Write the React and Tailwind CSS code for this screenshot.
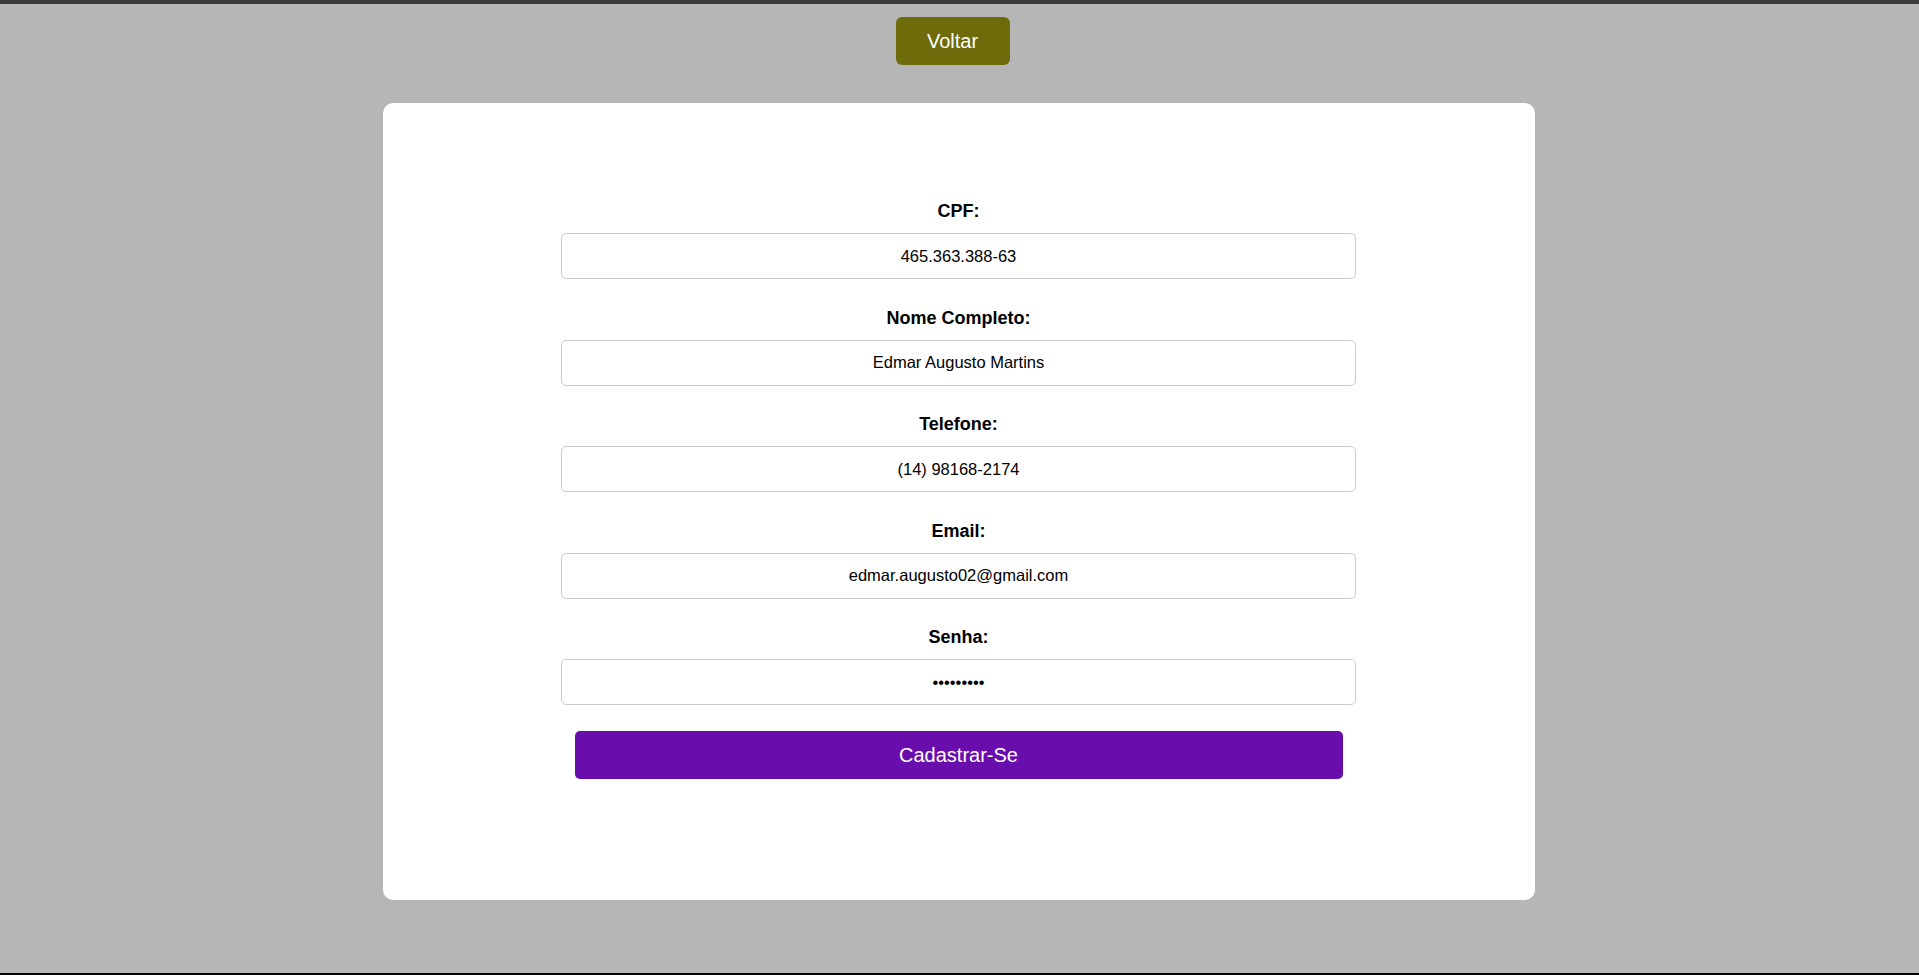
const fields = [
  { label: 'CPF:', value: '465.363.388-63', type: 'text' },
  { label: 'Nome Completo:', value: 'Edmar Augusto Martins', type: 'text' },
  { label: 'Telefone:', value: '(14) 98168-2174', type: 'text' },
  { label: 'Email:', value: 'edmar.augusto02@gmail.com', type: 'email' },
  { label: 'Senha:', value: '123456789', type: 'password' },
];

const App = () => {
  return (
    <div className="min-h-[975px] bg-[#b6b6b6] flex flex-col font-['Liberation_Sans',Arial,sans-serif]">
      <div className="h-[4px] bg-[#3b3b3b]" />

      <div className="flex-1 flex flex-col items-center pt-[13px]">
        {/* Back button */}
        <button className="mr-[14px] w-[114px] h-[48px] rounded-[6px] bg-[#6e6b0a] text-white text-[20px]">
          Voltar
        </button>

        {/* Form card */}
        <div className="mt-[38px] mr-[2px] w-[1152px] h-[797px] bg-white rounded-[10px] flex flex-col items-center pt-[97px]">
          <form className="flex flex-col items-center" onSubmit={(e) => e.preventDefault()}>
            {fields.map((f) => (
              <div key={f.label} className="flex flex-col items-center mb-[27.5px]">
                <label className="h-[22px] leading-[22px] text-[18px] font-bold text-black mb-[11px]">
                  {f.label}
                </label>
                <input
                  type={f.type}
                  defaultValue={f.value}
                  readOnly
                  className="w-[795px] h-[46px] border border-[#cccccc] rounded-[5px] text-center text-[16.5px] text-black outline-none"
                />
              </div>
            ))}
            <button
              type="submit"
              className="-mt-[1.5px] w-[768px] h-[48px] rounded-[5px] bg-[#6a0dad] text-white text-[20px]"
            >
              Cadastrar-Se
            </button>
          </form>
        </div>
      </div>

      <div className="h-[2px] bg-black" />
    </div>
  );
};

export default App;
